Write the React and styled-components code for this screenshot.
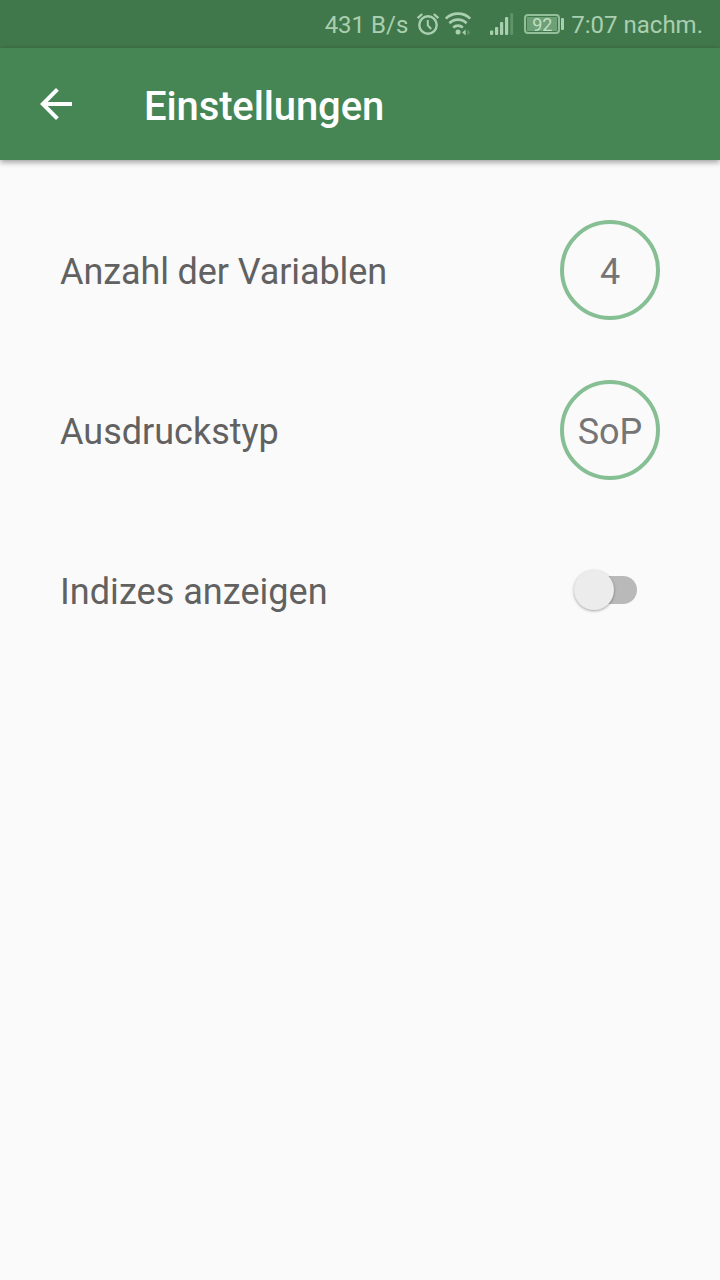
import { useState } from "react";
import styled, { createGlobalStyle } from "styled-components";

const AlarmIcon = () => (
  <svg width="24" height="24" viewBox="0 0 24 24" fill="none" stroke="#a9cfb0">
    <circle cx="12" cy="13" r="8.7" strokeWidth="2.4" />
    <path d="M11.8 8v5.4l3.4 3.6" strokeWidth="2" />
    <path d="M1.6 6.2 6.2 2M22.4 6.2 17.8 2" strokeWidth="2.3" />
  </svg>
);

const WifiIcon = () => (
  <svg width="28" height="24" viewBox="0 0 28 24" fill="none">
    <g stroke="#a9cfb0" strokeWidth="2.7">
      <path d="M1.8 6.6A17.4 17.4 0 0 1 26.2 6.6" />
      <path d="M5.4 11.2A12.2 12.2 0 0 1 22.6 11.2" />
      <path d="M9.2 15.6A6.8 6.8 0 0 1 18.8 15.6" />
    </g>
    <circle cx="14" cy="20" r="2.5" fill="#a9cfb0" />
    <path d="M18.2 20.5 21.6 17.6V23.4Z" fill="#a9cfb0" />
    <path d="M23.4 17.6 26.4 20.5 23.4 23.4Z" fill="#5f9468" />
  </svg>
);

const SignalIcon = () => (
  <svg width="24" height="24" viewBox="0 0 24 24" fill="#a9cfb0">
    <rect x="0" y="18.5" width="3.2" height="4.5" rx="1" />
    <rect x="5" y="15" width="3.2" height="8" rx="1" />
    <rect x="10" y="10" width="3.2" height="13" rx="1" />
    <rect x="15" y="5" width="3.2" height="18" rx="1" />
    <rect x="20.3" y="1" width="2.8" height="22" rx="1" fill="#5f9468" />
  </svg>
);

const BackIcon = () => (
  <svg width="48" height="48" viewBox="0 0 24 24" fill="#fff">
    <path d="M20 11H7.83l5.59-5.59L12 4l-8 8 8 8 1.41-1.41L7.83 13H20v-2z" />
  </svg>
);

const App = () => {
  const [showIndices, setShowIndices] = useState(false);

  return (
    <>
      <GlobalStyle />
      <Screen>
        <StatusBar>
          <StatusText className="speed">431 B/s</StatusText>
          <AlarmIcon />
          <WifiSlot>
            <WifiIcon />
          </WifiSlot>
          <SignalSlot>
            <SignalIcon />
          </SignalSlot>
          <Battery>
            <span>92</span>
          </Battery>
          <BatteryCap />
          <StatusText>7:07 nachm.</StatusText>
        </StatusBar>

        <AppBar>
          <BackButton aria-label="Zurück">
            <BackIcon />
          </BackButton>
          <h1>Einstellungen</h1>
        </AppBar>

        <Settings>
          <SettingRow>
            <Label $spacing="-0.1px">Anzahl der Variablen</Label>
            <ValueButton>4</ValueButton>
          </SettingRow>

          <SettingRow>
            <Label>Ausdruckstyp</Label>
            <ValueButton>SoP</ValueButton>
          </SettingRow>

          <SettingRow>
            <Label $spacing="0.04px">Indizes anzeigen</Label>
            <Switch
              role="switch"
              aria-checked={showIndices}
              aria-label="Indizes anzeigen"
              $on={showIndices}
              onClick={() => setShowIndices(!showIndices)}
            >
              <Thumb $on={showIndices} />
            </Switch>
          </SettingRow>
        </Settings>
      </Screen>
    </>
  );
};

export default App;

const GlobalStyle = createGlobalStyle`
  * {
    box-sizing: border-box;
  }

  body {
    margin: 0;
    background: #fafafa;
    font-family: Roboto, "Liberation Sans", sans-serif;
  }

  button {
    font-family: inherit;
    cursor: pointer;
  }
`;

const Screen = styled.div`
  width: 100%;
  min-height: 100vh;
  background: #fafafa;
`;

const StatusBar = styled.div`
  display: flex;
  justify-content: flex-end;
  align-items: center;
  height: 48px;
  padding-right: 17px;
  background: #41784b;

  svg {
    flex: none;
  }

  .speed {
    margin-right: 8px;
  }
`;

const StatusText = styled.span`
  color: #a9cfb0;
  font-size: 24px;
  line-height: 28px;
  white-space: nowrap;
  padding-top: 2px;
`;

const WifiSlot = styled.div`
  display: flex;
  margin-left: 4px;
`;

const SignalSlot = styled.div`
  display: flex;
  margin: 0 10px 0 18px;
`;

const Battery = styled.div`
  width: 36px;
  height: 20px;
  padding: 1px;
  border: 2px solid #93bf9b;
  border-radius: 4px;

  span {
    display: block;
    height: 100%;
    background: #6ea077;
    color: #bfdfc4;
    font-size: 18px;
    line-height: 15px;
    text-align: center;
  }
`;

const BatteryCap = styled.div`
  width: 3px;
  height: 12px;
  margin: 0 7px 0 1px;
  border-radius: 1px;
  background: #a9cfb0;
`;

const AppBar = styled.header`
  display: flex;
  align-items: center;
  height: 112px;
  padding-left: 32px;
  background: #468655;
  box-shadow: 0 2px 6px rgba(0, 0, 0, 0.4);

  h1 {
    margin: 5px 0 0 64px;
    color: #fff;
    font-size: 40px;
    font-weight: 500;
    line-height: 48px;
    letter-spacing: -0.12px;
  }
`;

const BackButton = styled.button`
  display: flex;
  padding: 0;
  border: none;
  background: none;
`;

const Settings = styled.main`
  display: flex;
  flex-direction: column;
  gap: 60px;
  padding: 60px;
`;

const SettingRow = styled.div`
  display: flex;
  justify-content: space-between;
  align-items: center;
  height: 100px;
`;

const Label = styled.span`
  padding-top: 3px;
  color: #616161;
  font-size: 36px;
  line-height: 42px;
  letter-spacing: ${(props) => props.$spacing || "normal"};
`;

const ValueButton = styled.button`
  width: 100px;
  height: 100px;
  padding: 3px 0 0;
  border: 4px solid #86bf93;
  border-radius: 50%;
  background: transparent;
  color: #757575;
  font-size: 36px;
  line-height: 42px;
`;

const Switch = styled.button`
  display: flex;
  align-items: center;
  justify-content: ${(props) => (props.$on ? "flex-end" : "flex-start")};
  width: 56px;
  height: 28px;
  margin-right: 23px;
  padding: 0;
  border: none;
  border-radius: 14px;
  background: ${(props) => (props.$on ? "#a2c2aa" : "#b9b9b9")};
`;

const Thumb = styled.span`
  flex: none;
  width: 40px;
  height: 40px;
  margin: ${(props) => (props.$on ? "0 -7px 0 0" : "0 0 0 -7px")};
  border-radius: 50%;
  background: ${(props) => (props.$on ? "#468655" : "#ececec")};
  box-shadow: 0 1px 3px rgba(0, 0, 0, 0.35);
`;
